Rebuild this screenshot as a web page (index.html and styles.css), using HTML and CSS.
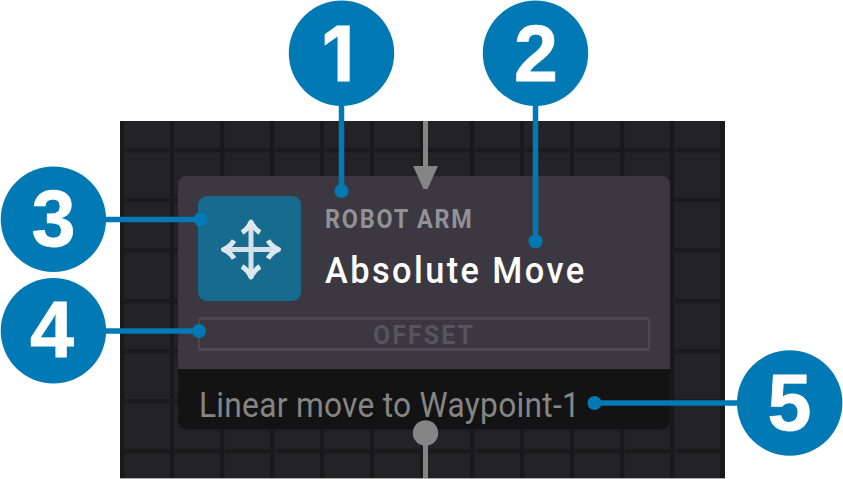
FILE: index.html
```html
<!DOCTYPE html>
<html lang="en">
<head>
<meta charset="utf-8">
<title>Program node</title>
<link rel="stylesheet" href="styles.css">
</head>
<body>
<main class="figure">
  <section class="canvas">
    <article class="node">
      <div class="node-body">
        <header class="node-header">
          <div class="node-icon">
            <svg viewBox="0 0 104 104" width="104" height="104">
              <path class="shaft" d="M53 27v54M27 53.500h52"/>
              <path class="heads" d="M44 36.500Q50 33 53 26Q56 33 62 36.500M44 70.500Q50 74 53 81Q56 74 62 70.500M36 44.500Q32.500 50.500 25.500 53.500Q32.500 56.500 36 62.500M70 44.500Q73.500 50.500 80.500 53.500Q73.500 56.500 70 62.500"/>
            </svg>
          </div>
          <div class="node-titles">
            <div class="category">ROBOT ARM</div>
            <div class="title">Absolute Move</div>
          </div>
        </header>
        <div class="offset"><span>OFFSET</span></div>
      </div>
      <footer class="node-footer"><span>Linear move to Waypoint-1</span></footer>
    </article>
  </section>
  <svg class="overlay" viewBox="0 0 843 479" width="843" height="479">
    <g class="flow">
      <path d="M423 121h5v45h10l-10.500 23h-4L413 166h10z"/>
      <circle cx="425.500" cy="433" r="12.700"/>
      <path d="M423 440h5v38h-5z"/>
    </g>
    <g class="leaders">
      <path d="M341.500 100v91M535.500 100v141M100 219.500h101M100 331h99M594 403h150"/>
    </g>
    <g class="callouts">
      <circle cx="341.500" cy="191" r="7"/>
      <circle cx="535.500" cy="241.300" r="7"/>
      <circle cx="200.500" cy="219.500" r="7"/>
      <circle cx="199" cy="331" r="7"/>
      <circle cx="594.500" cy="403" r="7"/>
      <circle cx="341.500" cy="53.200" r="52.700"/>
      <circle cx="535.500" cy="53.200" r="52.700"/>
      <circle cx="53.400" cy="219.300" r="52.700"/>
      <circle cx="53.400" cy="330.800" r="52.700"/>
      <circle cx="789.700" cy="403" r="52.700"/>
    </g>
    <g class="numbers">
      <text class="one" x="338" y="81">1</text>
      <text x="536" y="81">2</text>
      <text x="53.500" y="246">3</text>
      <text x="52" y="357">4</text>
      <text x="789.500" y="430">5</text>
    </g>
  </svg>
</main>
</body>
</html>
```
FILE: styles.css
```css
body {
  margin: 0;
  background: #fff;
}

.figure {
  position: relative;
  box-sizing: border-box;
  width: 843px;
  height: 479px;
  padding: 121px 118px 0 120px;
  overflow: hidden;
}

.canvas {
  box-sizing: border-box;
  height: 358px;
  padding: 55px 54px 0 58px;
  background:
    repeating-linear-gradient(90deg, #19191a 0 4px, #202023 4px 5px, transparent 5px 50px),
    repeating-linear-gradient(180deg, transparent 0 27px, #1a1a1b 27px 31px, #202023 31px 32px, transparent 32px 50.200px),
    #232327;
  border-bottom: 1px solid #aaa;
}

.node {
  width: 492px;
  height: 253px;
  border-radius: 8px;
  overflow: hidden;
  background: #3b3842;
  font-family: Roboto, "Liberation Sans", sans-serif;
  box-shadow: 1px 1px 2px #1d1d20;
}

.node-body {
  box-sizing: border-box;
  height: 193px;
  padding: 20px 20px 0;
}

.node-header {
  display: flex;
  gap: 24px;
}

.node-icon {
  width: 103px;
  height: 105px;
  border-radius: 9px;
  background: #176b8f;
}

.node-icon svg {
  display: block;
  fill: none;
  stroke-width: 5;
}

.shaft {
  stroke: #d3e2e9;
}

.heads {
  stroke: #dce8ee;
  stroke-linejoin: round;
}

.node-titles {
  padding-top: 8px;
  white-space: nowrap;
}

.category,
.title,
.node-footer span {
  transform-origin: left;
}

.category {
  font-size: 26px;
  line-height: 31px;
  font-weight: 700;
  letter-spacing: 2px;
  transform: scaleX(0.900);
  color: #929196;
}

.title {
  margin-top: 14px;
  font-size: 37px;
  line-height: 44px;
  font-weight: 500;
  letter-spacing: 2.600px;
  transform: scaleX(0.929);
  color: #fff;
}

.offset {
  display: flex;
  justify-content: center;
  align-items: center;
  box-sizing: border-box;
  height: 34px;
  margin-top: 16px;
  padding-top: 3px;
  border: 3px solid #4a4850;
  border-left-width: 2px;
  border-right-width: 2px;
  border-radius: 3px;
  font-size: 25px;
  font-weight: 700;
  letter-spacing: 2px;
  color: #56545c;
}

.node-footer {
  box-sizing: border-box;
  height: 61px;
  padding: 16px 0 0 21px;
  background: #131313;
  font-size: 34.500px;
  line-height: 41px;
  color: #858585;
  white-space: nowrap;
}

.node-footer span {
  display: inline-block;
  letter-spacing: 0.300px;
  transform: scaleX(0.919);
}

.overlay {
  position: absolute;
  top: 0;
  left: 0;
}

.flow {
  fill: #858585;
}

.leaders {
  stroke: #0079b5;
  stroke-width: 5.500;
}

.callouts {
  fill: #0079b5;
}

.numbers {
  fill: #fff;
  stroke: #fff;
  stroke-width: 0.800;
  font: 700 79px "Liberation Sans", sans-serif;
  text-anchor: middle;
}

.numbers .one {
  font: 700 75px Inter, "Liberation Sans", sans-serif;
}
```
